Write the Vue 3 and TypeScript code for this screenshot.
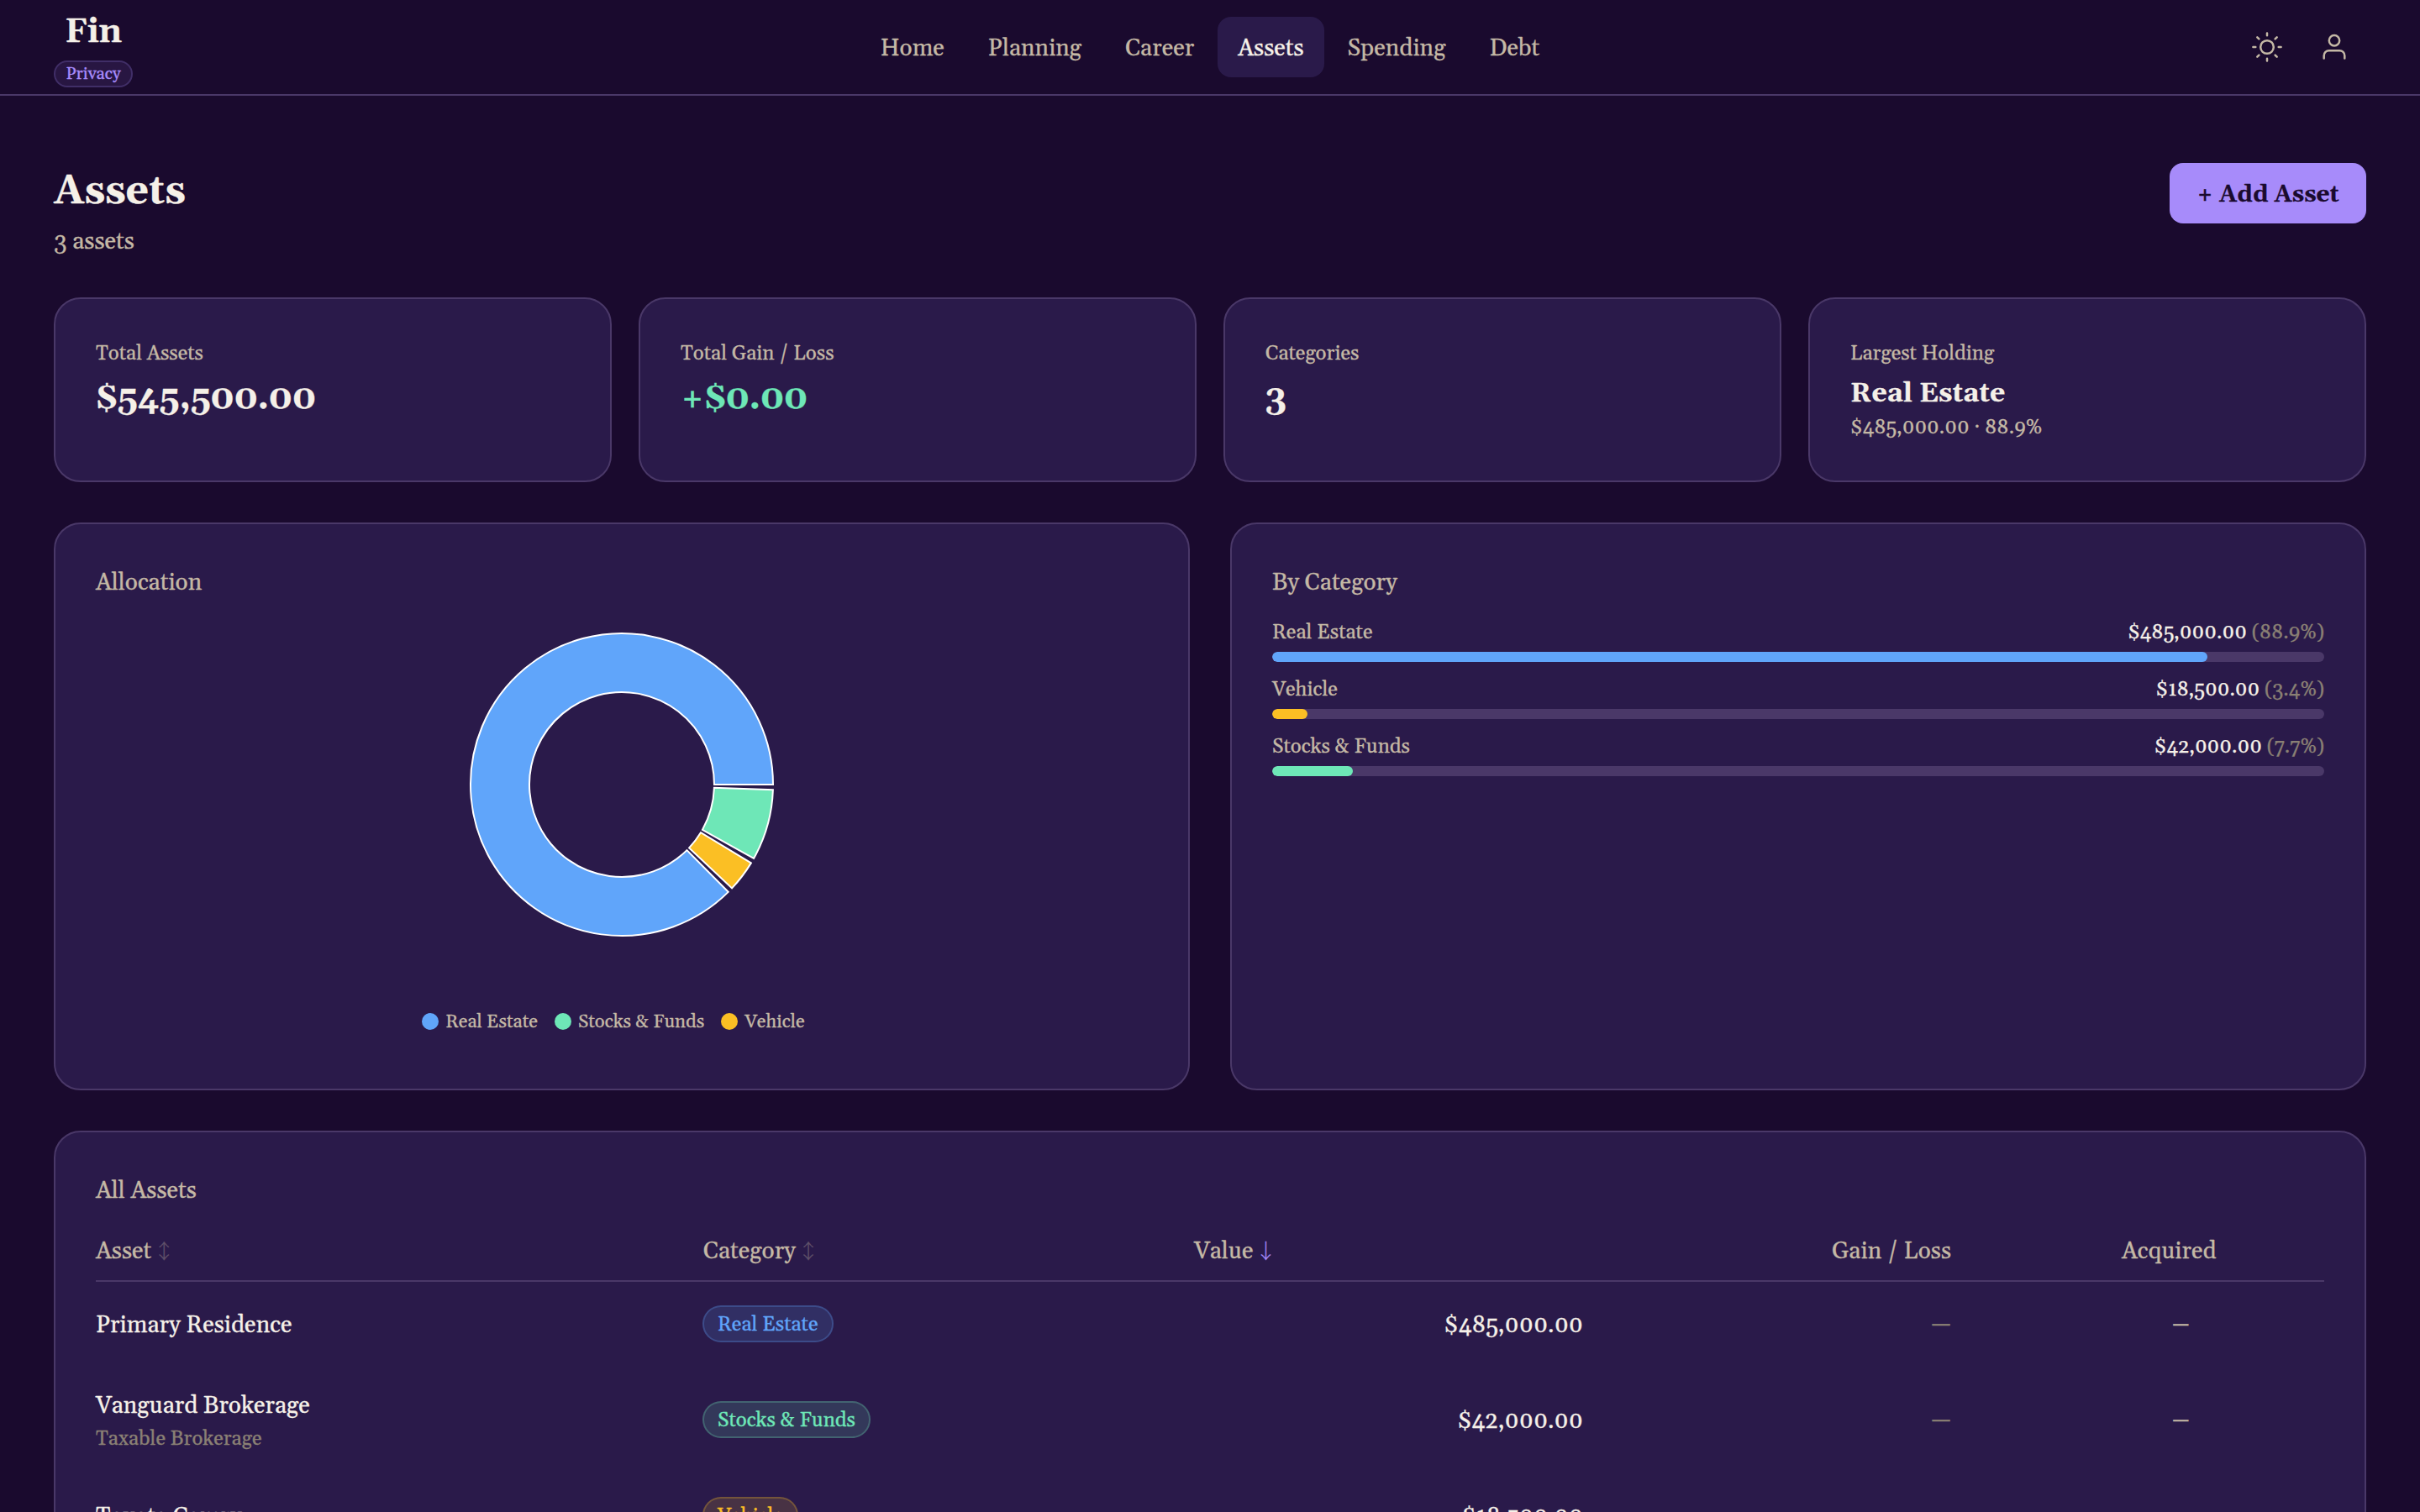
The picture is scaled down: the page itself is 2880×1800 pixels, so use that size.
<script setup lang="ts">
interface Category {
  name: string
  tone: string
  amount: string
  share: number
}

interface Asset {
  name: string
  note?: string
  category: string
  tone: string
  value: string
}

const links = ['Home', 'Planning', 'Career', 'Assets', 'Spending', 'Debt']
const current = 'Assets'

const categories: Category[] = [
  { name: 'Real Estate', tone: 'blue', amount: '$485,000.00', share: 485000 / 545500 },
  { name: 'Vehicle', tone: 'yellow', amount: '$18,500.00', share: 18500 / 545500 },
  { name: 'Stocks & Funds', tone: 'green', amount: '$42,000.00', share: 42000 / 545500 },
]

const legend = [...categories].sort((a, b) => a.name.localeCompare(b.name))

const assets: Asset[] = [
  { name: 'Primary Residence', category: 'Real Estate', tone: 'blue', value: '$485,000.00' },
  { name: 'Vanguard Brokerage', note: 'Taxable Brokerage', category: 'Stocks & Funds', tone: 'green', value: '$42,000.00' },
  { name: 'Toyota Camry', category: 'Vehicle', tone: 'yellow', value: '$18,500.00' },
]

const percent = (share: number) => (share * 100).toFixed(1) + '%'

// Ring geometry: slices run counter-clockwise from three o'clock, 2° apart.
const CENTER = 184
const OUTER = 180
const INNER = 110
const GAP = 2

function point(radius: number, degrees: number): string {
  const rad = (degrees * Math.PI) / 180
  return `${(CENTER + radius * Math.cos(rad)).toFixed(2)} ${(CENTER - radius * Math.sin(rad)).toFixed(2)}`
}

let cursor = 0
const slices = categories.map((c) => {
  const start = cursor
  const end = start + c.share * (360 - GAP * categories.length)
  cursor = end + GAP
  const large = end - start > 180 ? 1 : 0
  return {
    tone: c.tone,
    d: `M${point(OUTER, start)} A${OUTER} ${OUTER} 0 ${large} 0 ${point(OUTER, end)} L${point(INNER, end)} A${INNER} ${INNER} 0 ${large} 1 ${point(INNER, start)} Z`,
  }
})
</script>

<template>
  <div class="app">
    <header class="topbar">
      <div class="brand">
        <span class="logo">Fin</span>
        <span class="privacy">Privacy</span>
      </div>
      <nav class="nav">
        <a v-for="l in links" :key="l" class="link" :class="{ active: l === current }">{{ l }}</a>
      </nav>
      <div class="tools">
        <button class="tool" aria-label="Theme">
          <svg viewBox="0 0 36 36" class="icon">
            <circle cx="18" cy="18" r="7.8" />
            <path d="M18 1.4v2.9M18 31.7v2.9M1.4 18h2.9M31.7 18h2.9M6.3 6.3l2.1 2.1M27.6 27.6l2.1 2.1M6.3 29.7l2.1-2.1M27.6 8.4l2.1-2.1" />
          </svg>
        </button>
        <button class="tool" aria-label="Account">
          <svg viewBox="0 0 36 36" class="icon">
            <circle cx="18" cy="10.3" r="6.2" />
            <path d="M5.7 31.6v-3.4a6 6 0 0 1 6-6h12.6a6 6 0 0 1 6 6v3.4" />
          </svg>
        </button>
      </div>
    </header>

    <main class="page">
      <div class="heading">
        <div>
          <h1>Assets</h1>
          <p class="count">3 assets</p>
        </div>
        <button class="add">+ Add Asset</button>
      </div>

      <section class="stats">
        <div class="card stat">
          <p class="label">Total Assets</p>
          <p class="figure">$545,500.00</p>
        </div>
        <div class="card stat">
          <p class="label">Total Gain / Loss</p>
          <p class="figure gain">+$0.00</p>
        </div>
        <div class="card stat">
          <p class="label">Categories</p>
          <p class="figure">3</p>
        </div>
        <div class="card stat">
          <p class="label">Largest Holding</p>
          <p class="holding">Real Estate</p>
          <p class="label">$485,000.00 · 88.9%</p>
        </div>
      </section>

      <section class="panels">
        <div class="card panel">
          <h2>Allocation</h2>
          <svg class="ring" viewBox="0 0 368 368">
            <path v-for="s in slices" :key="s.tone" :class="s.tone" :d="s.d" />
          </svg>
          <ul class="legend">
            <li v-for="c in legend" :key="c.name"><i class="dot" :class="c.tone"></i><span>{{ c.name }}</span></li>
          </ul>
        </div>
        <div class="card panel">
          <h2>By Category</h2>
          <div class="bars">
            <div v-for="c in categories" :key="c.name">
              <div class="bar-head">
                <span>{{ c.name }}</span>
                <span class="amount">{{ c.amount }} <span class="share">({{ percent(c.share) }})</span></span>
              </div>
              <div class="track">
                <div class="fill" :class="c.tone" :style="{ width: c.share * 100 + '%' }"></div>
              </div>
            </div>
          </div>
        </div>
      </section>

      <section class="card table">
        <h2>All Assets</h2>
        <div class="row head">
          <span>Asset<span class="sort">↕</span></span>
          <span class="category">Category<span class="sort">↕</span></span>
          <span class="worth">Value<span class="sort on">↓</span></span>
          <span class="right">Gain / Loss</span>
          <span class="acquired">Acquired</span>
        </div>
        <div v-for="a in assets" :key="a.name" class="row body">
          <div>
            <p class="name">{{ a.name }}</p>
            <p v-if="a.note" class="note">{{ a.note }}</p>
          </div>
          <div><span class="badge" :class="a.tone">{{ a.category }}</span></div>
          <span class="right value">{{ a.value }}</span>
          <span class="right dim">—</span>
          <span class="date">—</span>
        </div>
      </section>
    </main>
  </div>
</template>

<style>
html,
body {
  margin: 0;
  background: #1a0a2e;
}
</style>

<style scoped>
.app {
  --text: #f5f0e8;
  --muted: #c4b8a5;
  --dim: #8a8074;
  --card: #2a1a4a;
  --line: #4a3868;
  --accent: #a78bfa;
  box-sizing: border-box;
  width: 2880px;
  height: 1800px;
  overflow: hidden;
  background: #1a0a2e;
  color: var(--text);
  font: 400 28px/42px Gelasio, Georgia, 'Liberation Serif', serif;
  -webkit-text-stroke: 0.3px;
}
.app * {
  box-sizing: border-box;
}
h1,
h2,
p,
ul {
  margin: 0;
  padding: 0;
}
button {
  border: 0;
  background: none;
  font: inherit;
}

.topbar {
  display: grid;
  grid-template-columns: 1fr auto 1fr;
  align-items: center;
  height: 114px;
  padding: 0 64px;
  border-bottom: 2px solid var(--line);
}
.brand {
  display: flex;
  flex-direction: column;
  align-items: center;
  justify-self: start;
}
.logo {
  padding-bottom: 2px;
  font-size: 40px;
  line-height: 62px;
  font-weight: 700;
  letter-spacing: -0.4px;
}
.privacy {
  height: 32px;
  padding: 0 12.4px;
  border: 2px solid rgba(167, 139, 250, 0.2);
  border-radius: 16px;
  background: rgba(167, 139, 250, 0.1);
  color: var(--accent);
  font-size: 20px;
  line-height: 28px;
}
.nav {
  display: flex;
  gap: 4px;
}
.link {
  padding: 17px 24px 13px;
  border-radius: 16px;
  color: var(--muted);
}
.link.active {
  background: var(--card);
  color: var(--text);
}
.tools {
  display: flex;
  justify-self: end;
  gap: 4px;
}
.tool {
  display: flex;
  padding: 20px;
}
.icon {
  width: 36px;
  height: 36px;
  fill: none;
  stroke: var(--muted);
  stroke-width: 2.5;
  stroke-linecap: round;
  stroke-linejoin: round;
}

.page {
  padding: 80px 64px 0;
}
.heading {
  display: flex;
  justify-content: space-between;
  align-items: flex-start;
  height: 160px;
}
h1 {
  font-size: 48px;
  line-height: 68px;
  font-weight: 700;
}
.count {
  margin-top: 5px;
  color: var(--muted);
}
.add {
  width: 234px;
  height: 72px;
  padding: 3px 0 0;
  border-radius: 16px;
  background: var(--accent);
  color: #1a0a2e;
  font-weight: 700;
}

.card {
  padding: 48px;
  border: 2px solid var(--line);
  border-radius: 32px;
  background: var(--card);
}
.stats {
  display: grid;
  grid-template-columns: repeat(4, 1fr);
  gap: 32px;
}
.stat {
  height: 220px;
  padding-top: 47px;
}
.label {
  margin-bottom: 6px;
  color: var(--muted);
  font-size: 24px;
  line-height: 36px;
}
.figure {
  font-size: 40px;
  line-height: 60px;
  font-weight: 700;
}
.gain {
  color: #6ee7b7;
}
.holding {
  margin-bottom: -2px;
  font-size: 32px;
  line-height: 48px;
  font-weight: 700;
}

.panels {
  display: grid;
  grid-template-columns: 1fr 1fr;
  gap: 48px;
  margin: 48px 0;
}
.panel {
  height: 676px;
}
h2 {
  padding-top: 1px;
  color: var(--muted);
  font-size: 28px;
  line-height: 42px;
  font-weight: 400;
}
.ring {
  display: block;
  width: 368px;
  height: 368px;
  margin: 35px auto 82px;
  stroke: #fff;
  stroke-width: 2;
}
.ring .blue {
  fill: #60a5fa;
}
.ring .green {
  fill: #6ee7b7;
}
.ring .yellow {
  fill: #fbbf24;
}
.legend {
  display: flex;
  justify-content: center;
  list-style: none;
  color: var(--muted);
  font-size: 22px;
  line-height: 32px;
}
.legend li {
  display: flex;
  align-items: center;
  height: 32px;
  margin-right: 20px;
}
.legend span {
  padding-top: 2px;
}
.dot {
  width: 20px;
  height: 20px;
  margin-right: 8px;
  border-radius: 50%;
}
.dot.blue,
.fill.blue {
  background: #60a5fa;
}
.dot.green,
.fill.green {
  background: #6ee7b7;
}
.dot.yellow,
.fill.yellow {
  background: #fbbf24;
}

.bars {
  display: flex;
  flex-direction: column;
  gap: 15px;
  margin-top: 20px;
}
.bar-head {
  display: flex;
  justify-content: space-between;
  margin-bottom: 5px;
  color: var(--muted);
  font-size: 24px;
  line-height: 36px;
}
.amount {
  color: var(--text);
}
.share,
.dim {
  color: var(--dim);
}
.track {
  height: 12px;
  overflow: hidden;
  border-radius: 6px;
  background: var(--line);
}
.fill {
  height: 100%;
  border-radius: 6px;
}

.row {
  display: grid;
  grid-template-columns: 722px 584px 464px 438px 1fr;
  align-items: center;
}
.head {
  height: 72px;
  margin-top: 15px;
  padding-top: 2px;
  border-bottom: 2px solid var(--line);
  color: var(--muted);
}
.category,
.worth {
  padding-left: 1px;
}
.body {
  height: 100px;
}
.body:has(.note) {
  height: 128px;
}
.name,
.value {
  padding-top: 3px;
}
.dim,
.date {
  padding-top: 1px;
}
.sort {
  display: inline-block;
  margin: 3px 0 -3px 3px;
  font-family: 'Noto Serif CJK SC', 'Noto Sans CJK SC', serif;
  font-size: 24px;
  line-height: 24px;
  opacity: 0.35;
}
.sort.on {
  color: var(--accent);
  opacity: 1;
}
.right {
  text-align: right;
}
.acquired {
  padding-left: 203px;
}
.date {
  padding-left: 263px;
  color: var(--muted);
  font-size: 24px;
}
.note {
  color: var(--dim);
  font-size: 24px;
  line-height: 36px;
}
.badge {
  display: block;
  width: fit-content;
  height: 44px;
  padding: 0 16px;
  border: 2px solid;
  border-radius: 22px;
  font-size: 24px;
  line-height: 42px;
}
.badge.blue {
  border-color: rgba(96, 165, 250, 0.25);
  background: rgba(96, 165, 250, 0.15);
  color: #60a5fa;
}
.badge.green {
  border-color: rgba(110, 231, 183, 0.25);
  background: rgba(110, 231, 183, 0.15);
  color: #6ee7b7;
}
.badge.yellow {
  border-color: rgba(251, 191, 36, 0.25);
  background: rgba(251, 191, 36, 0.15);
  color: #fbbf24;
}
</style>
